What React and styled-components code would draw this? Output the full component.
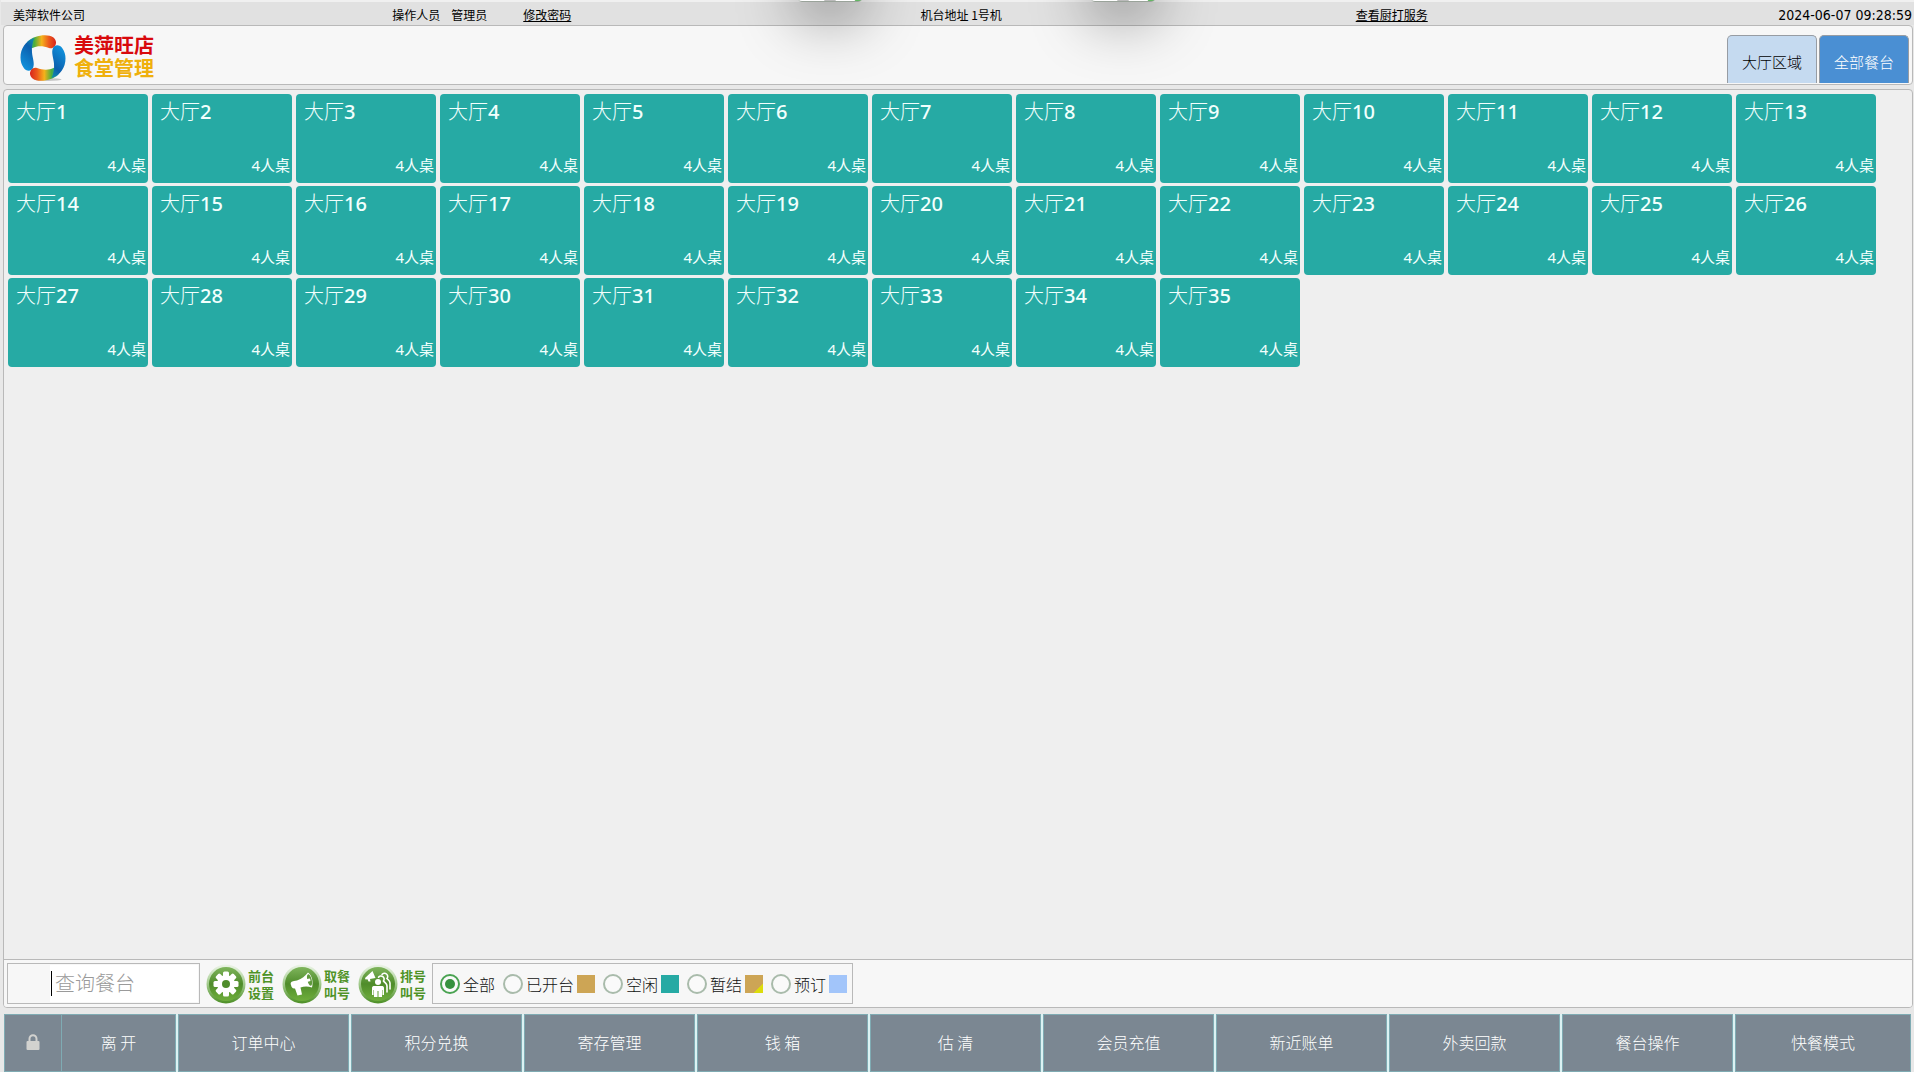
import React, { useState } from "react";
import styled, { createGlobalStyle, css } from "styled-components";

const sans = `"Noto Sans", "Noto Sans CJK SC", sans-serif`;
const cjk = `"Noto Sans CJK SC", "Noto Sans", sans-serif`;

const GlobalStyle = createGlobalStyle`
  * { box-sizing: border-box; }
  body { margin: 0; background: #e8e8e8; font-family: ${cjk}; color: #111; }
  button, input { font-family: inherit; margin: 0; }
`;

const Page = styled.div`
  display: flex;
  flex-direction: column;
  min-height: 100vh;
`;

const StatusBar = styled.div`
  display: grid;
  grid-template-columns:
    minmax(0, 379fr) minmax(0, 59fr) minmax(0, 72fr) minmax(0, 397fr)
    minmax(0, 435fr) minmax(0, 556fr);
  align-items: center;
  height: 25px;
  padding: 2px 2px 0 12px;
  margin-left: 1px;
  background: #e1e1e1;
  border-top: 2px solid #f0f0f0;
  font-size: 12px;
  line-height: 18px;
  white-space: nowrap;
  color: #000;
`;

const StatusLink = styled.a`
  color: inherit;
  text-decoration: underline;
`;

const StatusEnd = styled.span`
  display: flex;
  align-items: center;
  justify-content: space-between;
`;

const Clock = styled.time`
  font-family: "DejaVu Sans Condensed", ${sans};
  font-size: 14px;
  line-height: 18px;
  text-align: right;
`;

const Header = styled.header`
  display: flex;
  justify-content: space-between;
  align-items: center;
  height: 60px;
  margin: 0 1px 4px 3px;
  padding: 0 3px 1px 16px;
  background: #f7f7f7;
  border: 1px solid #b9b9b9;
  border-radius: 4px;
`;

const Brand = styled.h1`
  display: flex;
  align-items: center;
  gap: 8px;
  margin: 0;
  padding-top: 7px;
  font-family: "Liberation Sans", ${cjk};
  font-size: 20px;
  line-height: 23px;
  font-weight: 700;
`;

const BrandText = styled.span`
  display: flex;
  flex-direction: column;
`;

const BrandLine = styled.span`
  color: ${(p) => p.$color};
`;

const AreaTabs = styled.nav`
  display: flex;
  align-self: flex-end;
  gap: 2px;
`;

const AreaTab = styled.button`
  width: 90px;
  height: 48px;
  padding: 4px 0 0;
  border: 1px solid #979ca3;
  border-bottom: 0;
  border-radius: 5px 5px 0 0;
  background: ${(p) => (p.$active ? "#4a8fd3" : "#c5daf0")};
  color: ${(p) => (p.$active ? "#fff" : "#000")};
  font-size: 15px;
  font-weight: 300;
`;

const Workspace = styled.main`
  display: flex;
  flex-direction: column;
  flex: 1;
  margin: 0 1px 6px 3px;
  border: 1px solid #b9b9b9;
  border-radius: 4px;
  background: #efefef;
  overflow: hidden;
`;

const TableGrid = styled.div`
  display: grid;
  grid-template-columns: repeat(auto-fill, 140px);
  align-content: start;
  gap: 3px 4px;
  flex: 1;
  padding: 4px;
`;

const TableTile = styled.button`
  display: flex;
  flex-direction: column;
  justify-content: space-between;
  height: 89px;
  padding: 4px 2px 6px 8px;
  border: 0;
  border-radius: 4px;
  background: #26aaa4;
  color: #f2fffd;
  text-align: left;
`;

const TileName = styled.span`
  font-family: ${sans};
  font-size: 20px;
  line-height: 28px;
  font-weight: 300;
`;

const TileNumber = styled.span`
  font-weight: 500;
`;

const TileSeats = styled.span`
  align-self: flex-end;
  font-family: ${sans};
  font-size: 15px;
  line-height: 24px;
`;

const Toolbar = styled.div`
  display: flex;
  align-items: center;
  height: 48px;
  padding: 0 3px;
  background: #f7f7f7;
  border-top: 1px solid #b9b9b9;
`;

const SearchBox = styled.label`
  display: flex;
  align-items: center;
  width: 193px;
  height: 41px;
  padding: 1px 1px 1px 42px;
  margin-right: 6px;
  border: 1px solid #b9b9b9;
`;

const Caret = styled.span`
  width: 1px;
  height: 25px;
  margin-left: 1px;
  background: #000;
`;

const SearchField = styled.span`
  display: flex;
  align-items: center;
  flex: 1;
  min-width: 0;
  height: 100%;
  background: #fff;
`;

const SearchInput = styled.input`
  flex: 1;
  min-width: 0;
  height: 100%;
  padding: 0 0 2px 3px;
  border: 0;
  outline: 0;
  background: transparent;
  font-size: 20px;
  &::placeholder { color: #9a9a9a; opacity: 1; font-weight: 300; }
`;

const QuickActions = styled.div`
  display: flex;
  gap: 8px;
  margin-right: 6px;
`;

const QuickButton = styled.button`
  display: flex;
  align-items: center;
  gap: 2px;
  padding: 0;
  border: 0;
  background: none;
  color: #4f9327;
  font-size: 13px;
  line-height: 17px;
  font-weight: 700;
`;

const QuickLabel = styled.span`
  width: 26px;
`;

const Filters = styled.fieldset`
  display: flex;
  align-items: center;
  gap: 8px;
  height: 41px;
  margin: 0;
  padding: 0 5px 0 7px;
  border: 1px solid #b9b9b9;
  min-width: 0;
`;

const FilterLabel = styled.label`
  display: flex;
  align-items: center;
  gap: 3px;
  font-size: 16px;
  font-weight: 300;
  line-height: 20px;
  white-space: nowrap;
  color: #111;
`;

const Radio = styled.input`
  appearance: none;
  display: grid;
  place-items: center;
  width: 20px;
  height: 20px;
  border: 2px solid #a9bbab;
  border-radius: 50%;
  background: #fafafa;
  &:checked { border-color: #4aa352; }
  &:checked::before {
    content: "";
    width: 10px;
    height: 10px;
    border-radius: 50%;
    background: #36913e;
  }
`;

const Swatch = styled.span`
  width: 18px;
  height: 18px;
  background: ${(p) => p.$color};
  ${(p) =>
    p.$corner &&
    css`
      background: linear-gradient(135deg, ${p.$color} 74%, ${p.$corner} 75%);
    `}
`;

const ActionBar = styled.nav`
  display: flex;
  gap: 2px;
  margin: 0 3px 0 4px;
  background: #dcf2f3;
`;

const ActionGroup = styled.div`
  display: flex;
  flex: 172 1 0;
  min-width: 0;
`;

const ActionButton = styled.button`
  display: flex;
  align-items: center;
  justify-content: center;
  flex: 169 1 0;
  min-width: 0;
  height: 58px;
  padding: 0 0 2px;
  border: 1px solid #7fabb3;
  background: #7b8792;
  color: #fff;
  font-size: 16px;
  font-weight: 300;
  white-space: nowrap;
  ${ActionBar} > &:last-child { flex-grow: 174; }
`;

const LockButton = styled(ActionButton)`
  flex: none;
  width: 57px;
  border-right: 0;
`;

/* Edge of a desktop widget peeking in from above the window. */
const FloatingEdge = styled.div`
  position: absolute;
  top: -48px;
  left: ${(p) => p.$left};
  width: 64px;
  height: 50px;
  background: linear-gradient(90deg, #fff 40%, #bbb 42% 58%, #fff 60% 88%, #62b862 90%);
  border-bottom: 1px solid #9aa39a;
  border-radius: 4px;
  box-shadow: 0 16px 60px 0 rgba(0, 0, 0, 0.42);
`;

const FloatingLayer = styled.div`
  position: absolute;
  inset: 0 0 auto 0;
  height: 90px;
  overflow: hidden;
  pointer-events: none;
`;

function BrandLogo() {
  const ring = (
    <>
      <path
        d="M13 12C19 6 33 3.500 39 8C44.500 12.500 40 20.500 34.500 18.500C29 16.500 23 16 18 18.500C15 20 12 17 13 12Z"
        fill="url(#rainbow)"
      />
      <path
        d="M6 28C6 19 11 11.500 20 8.500C18 13 17 17 17.500 23C18 29 20.500 34 18.500 38.500C16.500 42.500 11.500 42 9 38C7 35 6 32 6 28Z"
        fill="url(#blade)"
      />
    </>
  );
  return (
    <svg width="46" height="46" viewBox="5.500 5.500 46 46" aria-hidden="true">
      <defs>
        <linearGradient id="rainbow">
          <stop offset="0" stopColor="#1a9ac0" />
          <stop offset="0.25" stopColor="#4caf3c" />
          <stop offset="0.5" stopColor="#f5b21a" />
          <stop offset="0.75" stopColor="#ec5a1c" />
          <stop offset="1" stopColor="#d8261c" />
        </linearGradient>
        <linearGradient id="blade" x1="0.800" y1="0" x2="0.400" y2="1">
          <stop offset="0" stopColor="#1289a8" />
          <stop offset="0.3" stopColor="#0b5fae" />
          <stop offset="1" stopColor="#1192dc" />
        </linearGradient>
      </defs>
      <ellipse cx="33" cy="50" rx="14" ry="1.500" fill="#000" opacity="0.2" />
      {ring}
      <g transform="rotate(180 28.500 28.500)">{ring}</g>
    </svg>
  );
}

function Disc({ children }) {
  return (
    <svg width="40" height="40" viewBox="0 0 40 40" aria-hidden="true">
      <defs>
        <linearGradient id="rim" x1="0" y1="0" x2="0" y2="1">
          <stop offset="0" stopColor="#eef5ea" />
          <stop offset="0.45" stopColor="#a9cf95" />
          <stop offset="1" stopColor="#4d8f26" />
        </linearGradient>
        <linearGradient id="face" x1="0" y1="0" x2="0" y2="1">
          <stop offset="0" stopColor="#7fb55c" />
          <stop offset="0.5" stopColor="#4f8c2b" />
          <stop offset="1" stopColor="#6fae3c" />
        </linearGradient>
      </defs>
      <circle cx="20" cy="20" r="19.500" fill="url(#rim)" />
      <circle cx="20" cy="20" r="17" fill="url(#face)" />
      {children}
    </svg>
  );
}

function GearIcon() {
  return (
    <Disc>
      <g fill="#fff">
        {[0, 45, 90, 135, 180, 225, 270, 315].map((a) => (
          <rect key={a} x="17" y="7.500" width="6" height="7" rx="1.500" transform={`rotate(${a} 20 20)`} />
        ))}
        <circle cx="20" cy="20" r="9" />
      </g>
      <circle cx="20" cy="20" r="4" fill="#4f8c2b" />
    </Disc>
  );
}

function MegaphoneIcon() {
  return (
    <Disc>
      <path
        d="M9 21C8 18.500 9.500 17.500 12 17L15 16.500C20 15 23 12 26 8.500C30 11 31.500 18 30 23.500C26 22 22 22 18.500 23.500L20 30.500L15.500 31.500L13 24.500C10.500 25 9.500 23.500 9 21Z"
        fill="#fff"
      />
      <ellipse cx="27.500" cy="16" rx="2.200" ry="6" transform="rotate(-14 27.500 16)" fill="#5f9a3c" />
      <path d="M24.500 15L28 14.500L28.500 17L25 18Z" fill="#fff" />
    </Disc>
  );
}

function QueueIcon() {
  return (
    <Disc>
      <g fill="#fff">
        <path d="M7 14L14.500 7L17.500 14L12 15L12.500 17.500L10.500 17.500L9.500 15.300L7.500 15.500Z" />
        <circle cx="20" cy="18" r="3" />
        <path d="M14 24C14 22.500 15 22 16.500 22H23.500C25 22 26 22.500 26 24V31H24.500V26H24V33H20.500V27H19.500V33H16V26H15.500V31H14Z" />
      </g>
      <g fill="none" stroke="#fff" strokeWidth="1.600" strokeLinecap="round">
        <path d="M20.500 13.200A3 3 0 0 1 25.500 17C27.500 19.500 29 19.500 29 22V28" />
        <path d="M24 10.500A3 3 0 0 1 29 14.500C31 16.500 32 17 32 19V25" />
      </g>
    </Disc>
  );
}

function LockIcon() {
  return (
    <svg width="14" height="16" viewBox="0 0 14 16" aria-hidden="true">
      <path d="M3.500 8V4.800a3.500 3.500 0 0 1 7 0V8" fill="none" stroke="#d2d2cf" strokeWidth="2" />
      <rect x="0.500" y="7" width="13" height="9" rx="1" fill="#d2d2cf" />
    </svg>
  );
}

const tables = Array.from({ length: 35 }, (_, i) => i + 1);

const quickActions = [
  { name: ["前台", "设置"], Icon: GearIcon },
  { name: ["取餐", "叫号"], Icon: MegaphoneIcon },
  { name: ["排号", "叫号"], Icon: QueueIcon },
];

const filters = [
  { name: "全部" },
  { name: "已开台", color: "#cda555" },
  { name: "空闲", color: "#26aaa4" },
  { name: "暂结", color: "#cda555", corner: "#dcdc0c" },
  { name: "预订", color: "#a2c5fa" },
];

const actions = [
  "订单中心", "积分兑换", "寄存管理", "钱 箱", "估 清",
  "会员充值", "新近账单", "外卖回款", "餐台操作", "快餐模式",
];

export default function App() {
  const [filter, setFilter] = useState("全部");
  const [query, setQuery] = useState("");
  const [area, setArea] = useState("全部餐台");

  return (
    <Page>
      <GlobalStyle />
      <StatusBar>
        <span>美萍软件公司</span>
        <span>操作人员</span>
        <span>管理员</span>
        <span><StatusLink href="#password">修改密码</StatusLink></span>
        <span>机台地址 1号机</span>
        <StatusEnd>
          <StatusLink href="#kitchen">查看厨打服务</StatusLink>
          <Clock>2024-06-07 09:28:59</Clock>
        </StatusEnd>
      </StatusBar>

      <Header>
        <Brand>
          <BrandLogo />
          <BrandText>
            <BrandLine $color="#d8090c">美萍旺店</BrandLine>
            <BrandLine $color="#efb00c">食堂管理</BrandLine>
          </BrandText>
        </Brand>
        <AreaTabs>
          {["大厅区域", "全部餐台"].map((name) => (
            <AreaTab key={name} $active={area === name} onClick={() => setArea(name)}>
              {name}
            </AreaTab>
          ))}
        </AreaTabs>
      </Header>

      <Workspace>
        <TableGrid>
          {tables.map((n) => (
            <TableTile key={n}>
              <TileName>大厅<TileNumber>{n}</TileNumber></TileName>
              <TileSeats>4人桌</TileSeats>
            </TableTile>
          ))}
        </TableGrid>

        <Toolbar>
          <SearchBox>
            <SearchField>
              <Caret />
              <SearchInput
                aria-label="查询餐台"
                placeholder="查询餐台"
                value={query}
                onChange={(e) => setQuery(e.target.value)}
              />
            </SearchField>
          </SearchBox>
          <QuickActions>
            {quickActions.map(({ name, Icon }) => (
              <QuickButton key={name[0]}>
                <Icon />
                <QuickLabel>{name[0]}<br />{name[1]}</QuickLabel>
              </QuickButton>
            ))}
          </QuickActions>
          <Filters aria-label="餐台状态">
            {filters.map(({ name, color, corner }) => (
              <FilterLabel key={name}>
                <Radio
                  type="radio"
                  name="status"
                  checked={filter === name}
                  onChange={() => setFilter(name)}
                />
                {name}
                {color && <Swatch $color={color} $corner={corner} />}
              </FilterLabel>
            ))}
          </Filters>
        </Toolbar>
      </Workspace>

      <ActionBar>
        <ActionGroup>
          <LockButton aria-label="锁屏"><LockIcon /></LockButton>
          <ActionButton>离 开</ActionButton>
        </ActionGroup>
        {actions.map((name) => (
          <ActionButton key={name}>{name}</ActionButton>
        ))}
      </ActionBar>

      <FloatingLayer aria-hidden="true">
        <FloatingEdge $left="41.700%" />
        <FloatingEdge $left="57%" />
      </FloatingLayer>
    </Page>
  );
}
